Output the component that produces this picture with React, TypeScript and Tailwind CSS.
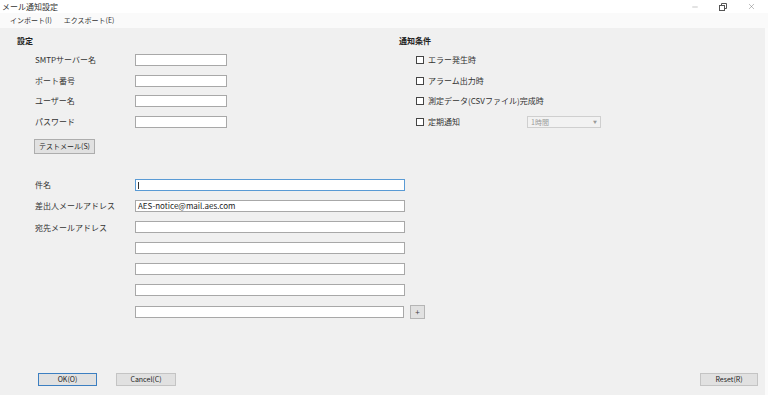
import { Minus, X } from 'lucide-react';

const font = { fontFamily: '"Noto Sans CJK JP", "Noto Sans", sans-serif' };

function TextBox({ w = 'w-[92px]', value = '', focused = false }: { w?: string; value?: string; focused?: boolean }) {
  return (
    <div
      className={`h-[12px] ${w} bg-white border flex items-center px-[2px] text-[8px] leading-none text-[#222] ${
        focused ? 'border-[#5a9bd5]' : 'border-[#a8a8a8]'
      }`}
    >
      {focused ? <span className="w-px h-[7px] bg-[#333]" /> : value}
    </div>
  );
}

function Check({ label }: { label: string }) {
  return (
    <div className="h-[12px] flex items-center gap-[4px]">
      <span className="w-[8px] h-[8px] border border-[#444] bg-white" />
      <span className="text-[8px] leading-none text-[#333] whitespace-nowrap">{label}</span>
    </div>
  );
}

export default function App() {
  const settings = ['SMTPサーバー名', 'ポート番号', 'ユーザー名', 'パスワード'];

  return (
    <div className="w-[768px] h-[395px] flex flex-col bg-white overflow-hidden" style={font}>
      {/* Title bar */}
      <div className="h-[13px] flex items-center justify-between pl-[2px] pr-[12px]">
        <span className="text-[8px] leading-none text-[#333]">メール通知設定</span>
        <div className="flex items-center gap-[20px] text-[#555]">
          <Minus size={8} strokeWidth={1} />
          <svg width="8" height="8" viewBox="0 0 8 8" fill="none" stroke="#555" strokeWidth="1">
            <rect x="0.5" y="2.5" width="5" height="5" />
            <path d="M2.5 2.5V0.5h5v5h-2" />
          </svg>
          <X size={9} strokeWidth={1} />
        </div>
      </div>

      {/* Menu bar */}
      <div className="h-[15px] flex items-center gap-[12px] pl-[10px] bg-[#fafafa] text-[7px] leading-none text-[#333]">
        <span>インポート(I)</span>
        <span>エクスポート(E)</span>
      </div>

      {/* Body */}
      <div className="flex-1 flex flex-col bg-[#f0f0f0] border-r-[3px] border-[#fbfbfb] pl-[17px] pr-[7px] pt-[9px] pb-[9px]">
        <div className="flex">
          {/* 設定 */}
          <div className="w-[382px] flex flex-col">
            <div className="text-[8px] font-bold leading-none text-[#222]">設定</div>
            <div className="flex flex-col gap-[8.7px] mt-[9px] pl-[18px]">
              {settings.map((s) => (
                <div key={s} className="flex items-center">
                  <span className="w-[100px] text-[8px] leading-none text-[#333]">{s}</span>
                  <TextBox />
                </div>
              ))}
            </div>
            <button className="ml-[17px] mt-[11px] w-[61px] h-[15px] bg-[#e1e1e1] border border-[#adadad] text-[7px] leading-none text-[#222] whitespace-nowrap">
              テストメール(S)
            </button>
          </div>

          {/* 通知条件 */}
          <div className="flex flex-col">
            <div className="text-[8px] font-bold leading-none text-[#222]">通知条件</div>
            <div className="flex flex-col gap-[8.7px] mt-[9px] pl-[17px]">
              <Check label="エラー発生時" />
              <Check label="アラーム出力時" />
              <Check label="測定データ(CSVファイル)完成時" />
              <div className="flex items-center">
                <div className="w-[111px]">
                  <Check label="定期通知" />
                </div>
                <div className="w-[74px] h-[12px] border border-[#cfcfcf] bg-[#f2f2f2] flex items-center justify-between px-[3px] text-[7px] leading-none text-[#9a9a9a]">
                  <span>1時間</span>
                  <span className="text-[4px]">▼</span>
                </div>
              </div>
            </div>
          </div>
        </div>

        {/* Mail addresses */}
        <div className="flex flex-col gap-[9px] mt-[25px] pl-[18px]">
          <div className="flex items-center">
            <span className="w-[100px] text-[8px] leading-none text-[#333]">件名</span>
            <TextBox w="w-[270px]" focused />
          </div>
          <div className="flex items-center">
            <span className="w-[100px] text-[8px] leading-none text-[#333]">差出人メールアドレス</span>
            <TextBox w="w-[270px]" value="AES-notice@mail.aes.com" />
          </div>
          <div className="flex">
            <span className="w-[100px] pt-[3px] text-[8px] leading-none text-[#333]">宛先メールアドレス</span>
            <div className="flex flex-col gap-[9px]">
              <TextBox w="w-[270px]" />
              <TextBox w="w-[270px]" />
              <TextBox w="w-[270px]" />
              <TextBox w="w-[270px]" />
              <div className="flex items-center gap-[6px]">
                <TextBox w="w-[269px]" />
                <button className="w-[15px] h-[14px] bg-[#e1e1e1] border border-[#b5b5b5] flex items-center justify-center text-[8px] leading-none text-[#444]">
                  +
                </button>
              </div>
            </div>
          </div>
        </div>

        {/* Footer buttons */}
        <div className="mt-auto flex items-center pl-[21px]">
          <button className="w-[59px] h-[13px] bg-[#e1e1e1] border border-[#3c7fc1] text-[7px] leading-none text-[#222]">OK(O)</button>
          <button className="ml-[19px] w-[60px] h-[13px] bg-[#e1e1e1] border border-[#c4c4c4] text-[7px] leading-none text-[#222]">
            Cancel(C)
          </button>
          <button className="ml-auto w-[58px] h-[13px] bg-[#e1e1e1] border border-[#c4c4c4] text-[7px] leading-none text-[#222]">
            Reset(R)
          </button>
        </div>
      </div>
    </div>
  );
}
